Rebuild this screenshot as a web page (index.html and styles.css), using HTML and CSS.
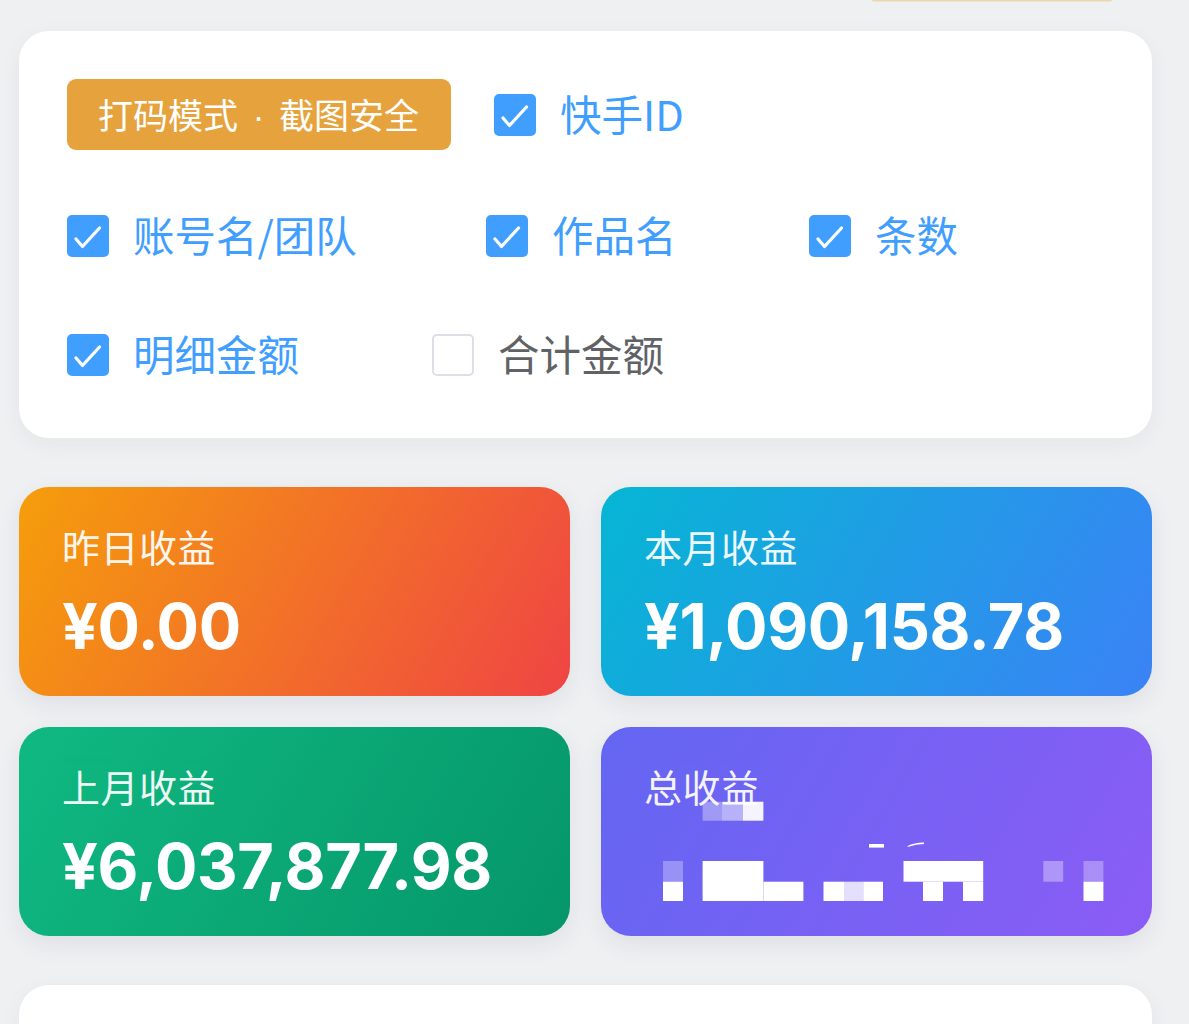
FILE: index.html
```html
<!DOCTYPE html>
<html lang="zh-CN">
<head>
<meta charset="utf-8">
<link rel="stylesheet" href="styles.css">
</head>
<body>
<div class="page">
  <div class="top-edge"><span class="prev-btn"></span></div>

  <section class="panel options">
    <div class="opt-row row1">
      <span class="mask-badge">打码模式 · 截图安全</span>
      <label class="check checked">
        <span class="box"><svg viewBox="0 0 38 38"><path d="M7 22 L13.5 29.5 L30.5 11"/></svg></span>
        <span class="txt">快手ID</span>
      </label>
    </div>
    <div class="opt-row row2">
      <label class="check checked w-a">
        <span class="box"><svg viewBox="0 0 38 38"><path d="M7 22 L13.5 29.5 L30.5 11"/></svg></span>
        <span class="txt">账号名/团队</span>
      </label>
      <label class="check checked w-b">
        <span class="box"><svg viewBox="0 0 38 38"><path d="M7 22 L13.5 29.5 L30.5 11"/></svg></span>
        <span class="txt">作品名</span>
      </label>
      <label class="check checked">
        <span class="box"><svg viewBox="0 0 38 38"><path d="M7 22 L13.5 29.5 L30.5 11"/></svg></span>
        <span class="txt">条数</span>
      </label>
    </div>
    <div class="opt-row row3">
      <label class="check checked w-c">
        <span class="box"><svg viewBox="0 0 38 38"><path d="M7 22 L13.5 29.5 L30.5 11"/></svg></span>
        <span class="txt">明细金额</span>
      </label>
      <label class="check">
        <span class="box"></span>
        <span class="txt">合计金额</span>
      </label>
    </div>
  </section>

  <section class="stats">
    <div class="stat orange">
      <div class="stat-label">昨日收益</div>
      <div class="stat-value">¥0.00</div>
    </div>
    <div class="stat blue">
      <div class="stat-label">本月收益</div>
      <div class="stat-value">¥1,090,158.78</div>
    </div>
    <div class="stat green">
      <div class="stat-label">上月收益</div>
      <div class="stat-value">¥6,037,877.98</div>
    </div>
    <div class="stat purple">
      <div class="stat-label">总收益</div>
      <div class="stat-value hidden-value">&nbsp;</div>
      <svg class="mosaic" viewBox="0 0 551 209" aria-hidden="true">
        <rect x="101.6" y="74.7" width="19.4" height="19" fill="#fff" opacity="0.35"/>
        <rect x="121" y="74.7" width="20.8" height="19" fill="#fff" opacity="0.5"/>
        <rect x="141.8" y="74.7" width="20.6" height="19" fill="#fff" opacity="0.92"/>
        <rect x="268" y="117" width="15" height="3.6" fill="#fff"/>
        <path d="M306 119.2 Q314 115.4 323 115.6 L323 117 Q315 117 307.5 119.8 Z" fill="#fff"/>
        <rect x="62" y="134" width="20" height="20.7" fill="#fff" opacity="0.3"/>
        <rect x="62" y="154.7" width="20" height="19.3" fill="#fff"/>
        <rect x="101.6" y="134" width="60.8" height="40" fill="#fff"/>
        <rect x="162.4" y="154.7" width="40" height="19.3" fill="#fff"/>
        <rect x="222.5" y="154.7" width="20.5" height="19.3" fill="#fff"/>
        <rect x="243" y="154.7" width="19.2" height="19.3" fill="#fff" opacity="0.8"/>
        <rect x="262.2" y="154.7" width="19.8" height="19.3" fill="#fff"/>
        <rect x="302.5" y="134" width="79.7" height="20.7" fill="#fff"/>
        <rect x="322" y="154.7" width="20" height="19.3" fill="#fff"/>
        <rect x="362" y="154.7" width="20.2" height="19.3" fill="#fff"/>
        <rect x="442.3" y="134" width="19.9" height="20.7" fill="#fff" opacity="0.35"/>
        <rect x="482.5" y="134" width="19.9" height="20.7" fill="#fff" opacity="0.3"/>
        <rect x="482.5" y="154.7" width="19.9" height="19.3" fill="#fff"/>
      </svg>
    </div>
  </section>

  <section class="panel next-panel"></section>
</div>
</body>
</html>
```

FILE: styles.css
```css
* { box-sizing: border-box; }

html, body {
  margin: 0;
  padding: 0;
  background: #eff0f2;
}

body {
  font-family: "Noto Sans CJK SC", "Noto Sans", sans-serif;
  overflow: hidden;
  height: 1024px;
}

.page {
  width: 1133px;
  margin-left: 19px;
}

.top-edge {
  height: 31px;
  padding-left: 853px;
}

.prev-btn {
  display: block;
  width: 240px;
  height: 2px;
  background: linear-gradient(#e4d2a0, #f1ead6);
  border-radius: 0 0 6px 6px;
}

.panel {
  background: #ffffff;
  border-radius: 30px;
  box-shadow: 0 6px 22px rgba(30, 40, 60, 0.05);
}

.options {
  height: 407px;
  padding: 48px 48px 0 48px;
}

.opt-row {
  display: flex;
  align-items: center;
}

.row1 { height: 71px; }
.row2 { height: 60px; margin-top: 56px; }
.row3 { height: 60px; margin-top: 59px; }

.mask-badge {
  display: inline-flex;
  align-items: center;
  height: 71px;
  padding: 0 32px 3px 31px;
  background: #e6a23c;
  color: #ffffff;
  border-radius: 9px;
  font-family: "Liberation Sans", "Noto Sans CJK SC", sans-serif;
  font-size: 35px;
  word-spacing: 5px;
  white-space: nowrap;
  margin-right: 43px;
}

.check {
  display: inline-flex;
  align-items: center;
  white-space: nowrap;
  font-size: 41.5px;
  line-height: 60px;
  color: #606266;
}

.check .txt {
  margin-top: -4px;
}

.check .box {
  width: 42px;
  height: 42px;
  border-radius: 5px;
  border: 2px solid #dcdfe6;
  background: #ffffff;
  margin-right: 24px;
  flex: none;
  display: flex;
}

.check.checked .box {
  background: #409eff;
  border-color: #409eff;
}

.check .box svg {
  width: 38px;
  height: 38px;
}

.check .box svg path {
  fill: none;
  stroke: #ffffff;
  stroke-width: 3.2;
  stroke-linecap: round;
  stroke-linejoin: round;
}

.check.checked {
  color: #409eff;
}

.w-a { width: 419px; }
.w-b { width: 323px; }
.w-c { width: 365px; }

.stats {
  margin-top: 49px;
  display: grid;
  grid-template-columns: 551px 551px;
  column-gap: 31px;
  row-gap: 31px;
}

.stat {
  position: relative;
  height: 209px;
  border-radius: 30px;
  padding: 36px 43px 0 43px;
  color: #ffffff;
  box-shadow: 0 8px 24px rgba(30, 40, 60, 0.08);
  overflow: hidden;
}

.stat-label {
  font-size: 38px;
  line-height: 46px;
  opacity: 0.92;
  letter-spacing: 0.5px;
}

.stat-value {
  margin-top: 20px;
  font-family: "Inter", "Liberation Sans", sans-serif;
  font-weight: 700;
  font-size: 63px;
  line-height: 74px;
  letter-spacing: -0.4px;
}

.orange { background: linear-gradient(120deg, #f59e0b 0%, #ef4444 100%); }
.blue   { background: linear-gradient(120deg, #06b6d4 0%, #3b82f6 100%); }
.green  { background: linear-gradient(120deg, #10b981 0%, #059669 100%); }
.purple { background: linear-gradient(120deg, #6366f1 0%, #8b5cf6 100%); }

.mosaic {
  position: absolute;
  left: 0;
  top: 0;
  width: 551px;
  height: 209px;
}

.next-panel {
  margin-top: 49px;
  height: 200px;
}
```
